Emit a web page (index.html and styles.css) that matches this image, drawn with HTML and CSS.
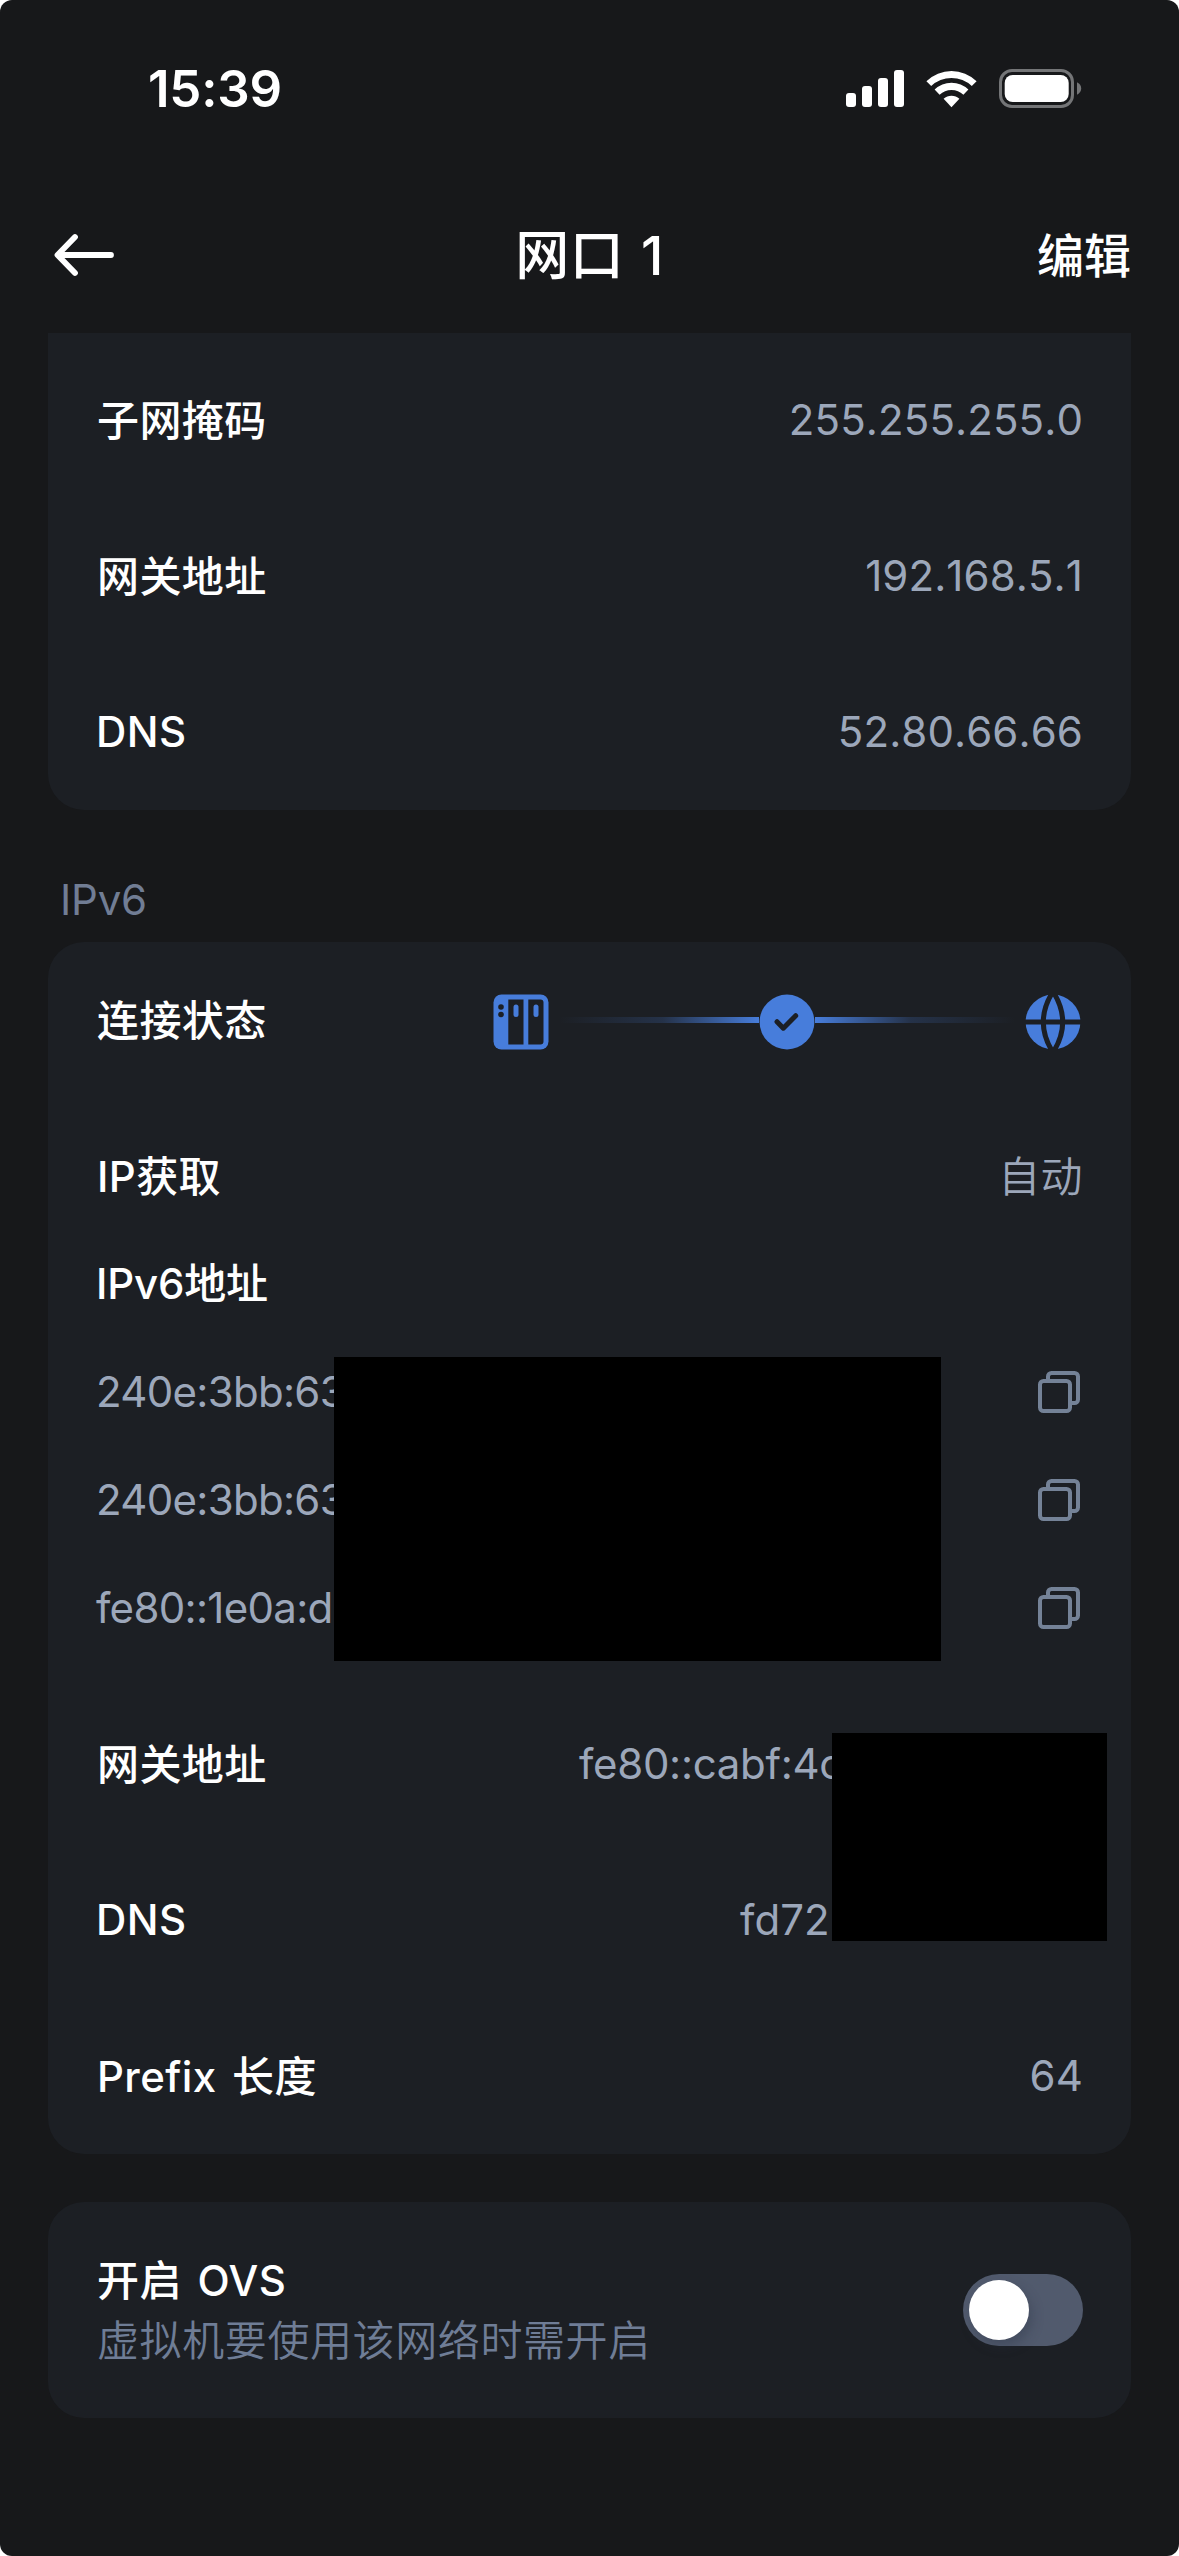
FILE: index.html
```html
<!DOCTYPE html>
<html lang="zh-CN">
<head>
<meta charset="utf-8">
<title>网口 1</title>
<link rel="stylesheet" href="styles.css">
</head>
<body>
<div class="screen">
  <div class="status-bar">
    <span class="clock">15:39</span>
    <svg class="status-icons" width="236" height="40" viewBox="0 0 236 40" fill="#fff">
      <rect x="0" y="24" width="10" height="14" rx="3"/>
      <rect x="16" y="17" width="10" height="21" rx="3"/>
      <rect x="32" y="9" width="10" height="29" rx="3"/>
      <rect x="48" y="1" width="10" height="37" rx="3"/>
      <path d="M80.4 12.2a36 36 0 0 1 50.2 0l-4.8 4.9a29.5 29.5 0 0 0-40.6 0z"/>
      <path d="M88.6 20.6a24.3 24.3 0 0 1 33.8 0l-5 5.1a17.3 17.3 0 0 0-23.8 0z"/>
      <path d="M97.6 29.8a11.5 11.5 0 0 1 15.8 0l-7.9 8.4z"/>
      <rect x="154.5" y="1.5" width="72" height="36" rx="11.5" fill="none" stroke="#747577" stroke-width="3"/>
      <rect x="158.7" y="6" width="64" height="27" rx="8"/>
      <path d="M231 13.3c5.6 2.4 5.6 10 0 12.4z" fill="#747577"/>
    </svg>
  </div>
  <header class="nav">
    <svg class="back" width="60" height="44" viewBox="0 0 60 44" fill="none" stroke="#fff" stroke-width="5.8" stroke-linecap="round" stroke-linejoin="round">
      <path d="M21 4 3.5 22 21 40M4 22h53"/>
    </svg>
    <h1 class="title">网口 1</h1>
    <span class="edit">编辑</span>
  </header>

  <main class="content">
    <section class="card card-clipped">
      <div class="row"><span class="label label-cjk">子网掩码</span><span class="value value-ip">255.255.255.0</span></div>
      <div class="row"><span class="label label-cjk">网关地址</span><span class="value value-ip">192.168.5.1</span></div>
      <div class="row"><span class="label">DNS</span><span class="value value-ip">52.80.66.66</span></div>
    </section>

    <h2 class="section-title">IPv6</h2>

    <section class="card">
      <div class="row">
        <span class="label label-cjk">连接状态</span>
        <div class="link-status">
          <svg width="56" height="56" viewBox="0 0 56 56">
            <rect x="0.5" y="0.5" width="55" height="55" rx="8" fill="#477ddb"/>
            <path fill="#1c1f24" d="M15.3 5.5h15.2v45H15.3zM35.3 5.5h12.2a3 3 0 0 1 3 3v39a3 3 0 0 1-3 3H35.3z"/>
            <circle cx="8" cy="13" r="2.8" fill="#1c1f24"/>
            <circle cx="8" cy="20.5" r="2.8" fill="#1c1f24"/>
            <rect x="20.5" y="10.5" width="5" height="12.5" rx="2.5" fill="#477ddb"/>
            <rect x="40.5" y="10.5" width="5" height="12.5" rx="2.5" fill="#477ddb"/>
          </svg>
          <span class="wire wire-in"></span>
          <svg width="56" height="56" viewBox="0 0 56 56">
            <circle cx="28" cy="28" r="27.4" fill="#477ddb"/>
            <path d="M18 27.7l6.3 6.5L36.7 21.7" fill="none" stroke="#1c1f24" stroke-width="5" stroke-linecap="round" stroke-linejoin="round"/>
          </svg>
          <span class="wire wire-out"></span>
          <svg width="56" height="56" viewBox="0 0 56 56">
            <circle cx="28" cy="28" r="27.4" fill="#477ddb"/>
            <path d="M28-2.5Q8.6 28 28 58.5M28-2.5Q47.4 28 28 58.5M0 28h56" fill="none" stroke="#1c1f24" stroke-width="5"/>
          </svg>
        </div>
      </div>
      <div class="row"><span class="label label-cjk">IP获取</span><span class="value value-cjk">自动</span></div>
      <div class="addresses">
        <span class="label label-tight">IPv6地址</span>
        <div class="address"><span class="value value-address">240e:3bb:63</span><svg class="copy" width="42" height="42" viewBox="0 0 42 42"><path d="M10 9V5.5A3.5 3.5 0 0 1 13.5 2h23A3.5 3.5 0 0 1 40 5.5v23a3.5 3.5 0 0 1-3.5 3.500H33"/><rect x="2" y="10" width="30" height="30" rx="3.5"/></svg></div>
        <div class="address"><span class="value value-address">240e:3bb:63</span><svg class="copy" width="42" height="42" viewBox="0 0 42 42"><path d="M10 9V5.5A3.5 3.5 0 0 1 13.5 2h23A3.5 3.5 0 0 1 40 5.5v23a3.5 3.5 0 0 1-3.5 3.500H33"/><rect x="2" y="10" width="30" height="30" rx="3.5"/></svg></div>
        <div class="address"><span class="value value-address">fe80::1e0a:d</span><svg class="copy" width="42" height="42" viewBox="0 0 42 42"><path d="M10 9V5.5A3.5 3.5 0 0 1 13.5 2h23A3.5 3.5 0 0 1 40 5.5v23a3.5 3.5 0 0 1-3.5 3.500H33"/><rect x="2" y="10" width="30" height="30" rx="3.5"/></svg></div>
        <div class="mask mask-addresses"></div>
      </div>
      <div class="hidden-rows">
        <div class="row"><span class="label label-cjk">网关地址</span><span class="value value-gateway">fe80::cabf:4c</span></div>
        <div class="row"><span class="label">DNS</span><span class="value value-dns">fd72</span></div>
        <div class="mask mask-values"></div>
      </div>
      <div class="row"><span class="label label-cjk">Prefix 长度</span><span class="value">64</span></div>
    </section>

    <section class="card card-ovs">
      <div class="ovs-text">
        <span class="label label-cjk">开启 OVS</span>
        <span class="hint">虚拟机要使用该网络时需开启</span>
      </div>
      <div class="toggle"><span class="knob"></span></div>
    </section>
  </main>
</div>
</body>
</html>
```

FILE: styles.css
```css
* {
  box-sizing: border-box;
}

body {
  margin: 0;
  background: #fff;
  font-family: Inter, "Noto Sans CJK SC", sans-serif;
  font-size: 42px;
  line-height: 60px;
  color: #fff;
}

svg {
  display: block;
  flex: none;
}

.screen {
  width: 1179px;
  height: 2556px;
  background: #17181a;
  border-radius: 12px;
  overflow: hidden;
}

.status-bar {
  display: flex;
  justify-content: space-between;
  align-items: center;
  height: 177px;
  padding: 0 97px 0 148px;
}

.clock {
  font-size: 51px;
  font-weight: 600;
  letter-spacing: -0.2px;
}

.nav {
  display: grid;
  grid-template-columns: 1fr auto 1fr;
  align-items: center;
  height: 156px;
  padding: 2px 48px 0;
}

.back {
  margin: -2px 0 0 6px;
}

.title {
  margin: 0;
  font-size: 54px;
  font-weight: 500;
  letter-spacing: 0.4px;
  word-spacing: 2px;
}

.edit {
  justify-self: end;
  font-size: 47px;
  font-weight: 500;
}

.content {
  padding: 0 48px;
}

.card {
  background: #1c1f24;
  border-radius: 36px;
}

.card-clipped {
  padding-top: 9px;
  border-radius: 0 0 36px 36px;
}

.row {
  display: flex;
  justify-content: space-between;
  align-items: center;
  height: 156px;
  padding: 0 48px;
}

.label {
  font-weight: 500;
  letter-spacing: 0.4px;
  word-spacing: 4px;
}

.label-cjk {
  height: 60px;
  padding: 1px 0 0 1px;
}

.label-tight {
  letter-spacing: -0.2px;
}

.value {
  color: #9ca7ba;
  font-weight: 400;
  letter-spacing: 0.1px;
}

.value-cjk {
  height: 60px;
  padding-top: 1px;
  font-weight: 350;
  letter-spacing: 0.4px;
}

.value-ip {
  font-kerning: none;
  letter-spacing: 0.1px;
}

.value-address {
  letter-spacing: -0.7px;
}

.section-title {
  margin: 0;
  padding: 60px 12px 12px;
  font-size: 42px;
  font-weight: 400;
  letter-spacing: -0.2px;
  color: #717d94;
}

.link-status {
  display: flex;
  align-items: center;
  width: 588px;
  margin-right: 2px;
  padding-top: 3px;
}

.wire {
  flex: 1;
  height: 6px;
  margin-top: -3px;
}

.wire-in {
  margin-left: 10px;
  background: linear-gradient(90deg, rgba(71, 125, 219, 0), rgba(71, 125, 219, 0.2) 52%, #477ddb);
}

.wire-out {
  margin-right: 10px;
  background: linear-gradient(270deg, rgba(71, 125, 219, 0), rgba(71, 125, 219, 0.2) 52%, #477ddb);
}

.addresses {
  position: relative;
  display: flex;
  flex-direction: column;
  gap: 48px;
  padding: 0 51px 48px 48px;
}

.address {
  display: flex;
  justify-content: space-between;
  align-items: center;
  height: 60px;
}

.copy {
  fill: none;
  stroke: #748297;
  stroke-width: 4;
}

.hidden-rows {
  position: relative;
}

.value-gateway {
  width: 504px;
  letter-spacing: -0.3px;
}

.value-dns {
  width: 343px;
}

.mask {
  position: absolute;
  background: #000;
}

.mask-addresses {
  left: 286px;
  top: 103px;
  width: 607px;
  height: 304px;
}

.mask-values {
  left: 784px;
  top: 47px;
  width: 275px;
  height: 208px;
}

.card-ovs {
  display: flex;
  justify-content: space-between;
  align-items: center;
  height: 216px;
  margin-top: 48px;
  padding: 0 48px;
}

.ovs-text {
  display: flex;
  flex-direction: column;
}

.hint {
  height: 60px;
  padding: 1px 0 0 1px;
  color: #6f7d96;
  font-weight: 350;
  letter-spacing: 0.6px;
}

.toggle {
  width: 120px;
  height: 72px;
  padding: 6px;
  border-radius: 36px;
  background: #515a6d;
}

.knob {
  display: block;
  width: 60px;
  height: 60px;
  border-radius: 50%;
  background: #fff;
  box-shadow: 3px 6px 12px rgba(40, 50, 65, 0.35);
}
```
